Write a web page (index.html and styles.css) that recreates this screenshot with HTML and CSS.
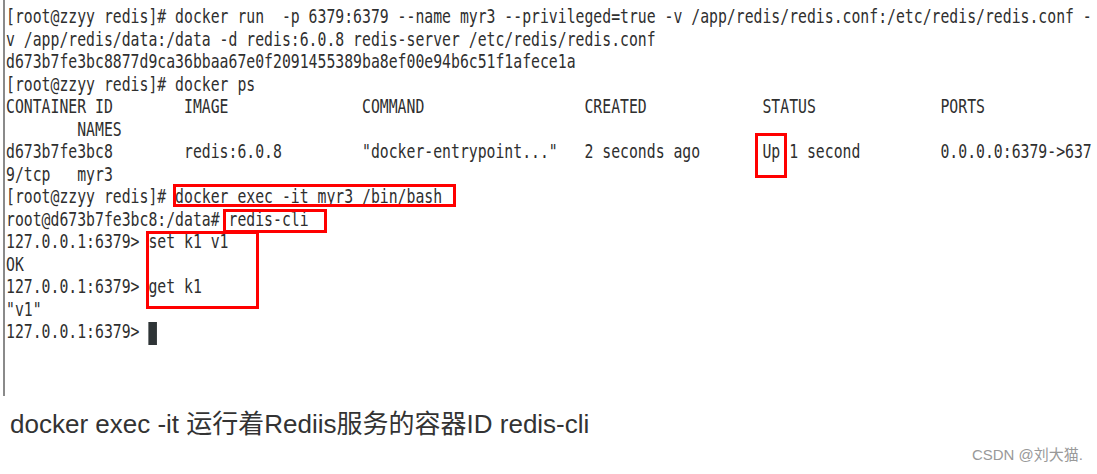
FILE: index.html
```html
<!DOCTYPE html>
<html lang="zh-CN">
<head>
<meta charset="utf-8">
<title>docker exec redis-cli</title>
<link rel="stylesheet" href="styles.css">
</head>
<body>
<div class="shot">
  <div class="terminal">
<pre class="term">[root@zzyy redis]# docker run  -p 6379:6379 --name myr3 --privileged=true -v /app/redis/redis.conf:/etc/redis/redis.conf -
v /app/redis/data:/data -d redis:6.0.8 redis-server /etc/redis/redis.conf
d673b7fe3bc8877d9ca36bbaa67e0f2091455389ba8ef00e94b6c51f1afece1a
[root@zzyy redis]# docker ps
CONTAINER ID        IMAGE               COMMAND                  CREATED             STATUS              PORTS
        NAMES
d673b7fe3bc8        redis:6.0.8         "docker-entrypoint..."   2 seconds ago       Up 1 second         0.0.0.0:6379->637
9/tcp   myr3
[root@zzyy redis]# docker exec -it myr3 /bin/bash
root@d673b7fe3bc8:/data# redis-cli
127.0.0.1:6379> set k1 v1
OK
127.0.0.1:6379> get k1
"v1"
127.0.0.1:6379> <span class="cursor"></span></pre>
  </div>
  <div class="mark mark-exec"></div>
  <div class="mark mark-cli"></div>
  <div class="mark mark-cmds"></div>
  <div class="mark mark-up"></div>
  <p class="caption">docker exec -it 运行着Rediis服务的容器ID redis-cli</p>
  <div class="watermark">CSDN @刘大猫.</div>
</div>
</body>
</html>
```
FILE: styles.css
```css
html, body {
  margin: 0;
  padding: 0;
  background: #ffffff;
}

.shot {
  position: relative;
  width: 1097px;
  height: 474px;
  overflow: hidden;
}

.terminal {
  margin-left: 3px;
  height: 396px;
  border-left: 2px solid #8a8a8a;
  padding-left: 1px;
  box-sizing: border-box;
}

.term {
  margin: 0;
  padding-top: 5px;
  font-family: "DejaVu Sans Mono", monospace;
  font-size: 19px;
  line-height: 22.5px;
  color: #2f2f2f;
  white-space: pre;
  width: 1400px;
  transform: scaleX(0.778);
  transform-origin: 0 0;
}

.cursor {
  display: inline-block;
  width: 1ch;
  height: 23px;
  vertical-align: -7px;
  background: #2e3436;
}

.mark {
  position: absolute;
  border: 3px solid #ff0000;
  box-sizing: border-box;
}

.mark-exec { left: 173px; top: 184px; width: 283px; height: 23px; }
.mark-cli  { left: 223px; top: 209px; width: 104px; height: 24px; }
.mark-cmds { left: 146px; top: 231px; width: 113px; height: 78px; }
.mark-up   { left: 755px; top: 133px; width: 32px;  height: 45px; }

.caption {
  margin: 13px 0 0 10px;
  font-family: "Liberation Sans", "Noto Sans CJK SC", sans-serif;
  font-size: 26px;
  line-height: 30px;
  color: #333333;
}

.watermark {
  margin-top: 6px;
  padding-right: 14px;
  text-align: right;
  font-family: "Liberation Sans", "Noto Sans CJK SC", sans-serif;
  font-size: 15px;
  line-height: 20px;
  color: #999999;
}
```
